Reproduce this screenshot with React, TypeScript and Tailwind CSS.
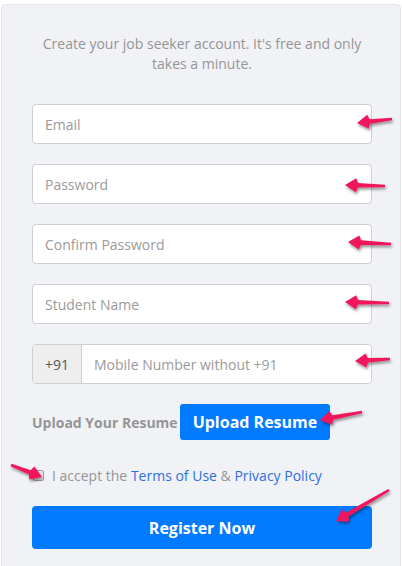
import React from "react";

type Pt = [number, number];

// annotation arrow: tip is where the head points, tail is the far end of the shaft
function arrowPoints(tip: Pt, tail: Pt) {
    const [tx, ty] = tip;
    const [ex, ey] = tail;
    const len = Math.hypot(ex - tx, ey - ty);
    const ux = (ex - tx) / len;
    const uy = (ey - ty) / len;
    const nx = -uy;
    const ny = ux;
    const head = 13;
    const headW = 7;
    const shaftStart = 2.3;
    const shaftEnd = 1.3;
    const bx = tx + ux * head;
    const by = ty + uy * head;
    const p = (x: number, y: number) => `${x.toFixed(1)},${y.toFixed(1)}`;
    return [
        p(tx, ty),
        p(bx + nx * headW - ux * 2, by + ny * headW - uy * 2),
        p(bx + nx * shaftStart, by + ny * shaftStart),
        p(ex + nx * shaftEnd, ey + ny * shaftEnd),
        p(ex - nx * shaftEnd, ey - ny * shaftEnd),
        p(bx - nx * shaftStart, by - ny * shaftStart),
        p(bx - nx * headW - ux * 2, by - ny * headW - uy * 2),
    ].join(" ");
}

const arrows: [Pt, Pt][] = [
    [[357, 123], [392, 119]],
    [[345, 185], [385, 186]],
    [[348, 242], [391, 244]],
    [[345, 302], [389, 303]],
    [[355, 361], [390, 359]],
    [[320, 420], [362, 412]],
    [[42, 477], [11, 465]],
    [[336, 521], [389, 490]],
];

function Field({ placeholder }: { placeholder: string }) {
    return (
        <input
            type="text"
            placeholder={placeholder}
            className="w-full h-10 px-3 bg-white border border-[#cfcfd3] rounded-[4px] text-[14px] text-[#555] placeholder:text-[#9a9a9a] focus:outline-none"
        />
    );
}

export default function App() {
    return (
        <div className="relative w-[402px] h-[566px] bg-white overflow-hidden" style={{ fontFamily: '"Open Sans", "Noto Sans", sans-serif' }}>
            <div className="ml-[1px] mt-[4px] w-[400px] h-[600px] bg-[#f1f2f6] border border-[#e4e5ea] rounded-t-[4px] pl-[30px] pr-[28px] pt-[29px]">
                <p className="text-center text-[14px] leading-[20px] text-[#959595] px-[6px]">
                    Create your job seeker account. It's free and only takes a minute.
                </p>

                <div className="mt-[30px] flex flex-col gap-5">
                    <Field placeholder="Email" />
                    <Field placeholder="Password" />
                    <Field placeholder="Confirm Password" />
                    <Field placeholder="Student Name" />
                    <div className="flex h-10 border border-[#cfcfd3] rounded-[4px] overflow-hidden">
                        <span className="w-[49px] flex items-center justify-center bg-[#eeeeee] border-r border-[#cfcfd3] text-[14px] text-[#555]">
                            +91
                        </span>
                        <input
                            type="tel"
                            placeholder="Mobile Number without +91"
                            className="flex-1 min-w-0 px-3 bg-white text-[14px] text-[#555] placeholder:text-[#9a9a9a] focus:outline-none"
                        />
                    </div>
                </div>

                <div className="mt-[20px] flex items-center gap-[2px]">
                    <span className="text-[14px] font-bold text-[#959595]">Upload Your Resume</span>
                    <button className="h-[36px] px-[13px] bg-[#007bff] rounded-[3px] text-white text-[16px] font-bold">
                        Upload Resume
                    </button>
                </div>

                <label className="mt-[25px] flex items-center gap-[8px] text-[14px] text-[#959595]">
                    <span className="ml-[1px] w-[11px] h-[11px] border border-[#9d9d9d] rounded-[2px] bg-[#e9e9ec]" />
                    <span>
                        I accept the <a className="text-[#2f6fde]">Terms of Use</a> &amp;{" "}
                        <a className="text-[#2f6fde]">Privacy Policy</a>
                    </span>
                </label>

                <button className="mt-[20px] w-full h-[43px] bg-[#007bff] rounded-[4px] text-white text-[16px] font-bold">
                    Register Now
                </button>
            </div>

            <svg className="absolute inset-0 pointer-events-none" width="402" height="566">
                <defs>
                    <filter id="shadow" x="-20%" y="-50%" width="140%" height="200%">
                        <feDropShadow dx="1" dy="2" stdDeviation="1.5" floodColor="#000" floodOpacity="0.45" />
                    </filter>
                </defs>
                {arrows.map(([tip, tail], i) => (
                    <polygon key={i} points={arrowPoints(tip, tail)} fill="#f0185c" filter="url(#shadow)" />
                ))}
            </svg>
        </div>
    );
}
